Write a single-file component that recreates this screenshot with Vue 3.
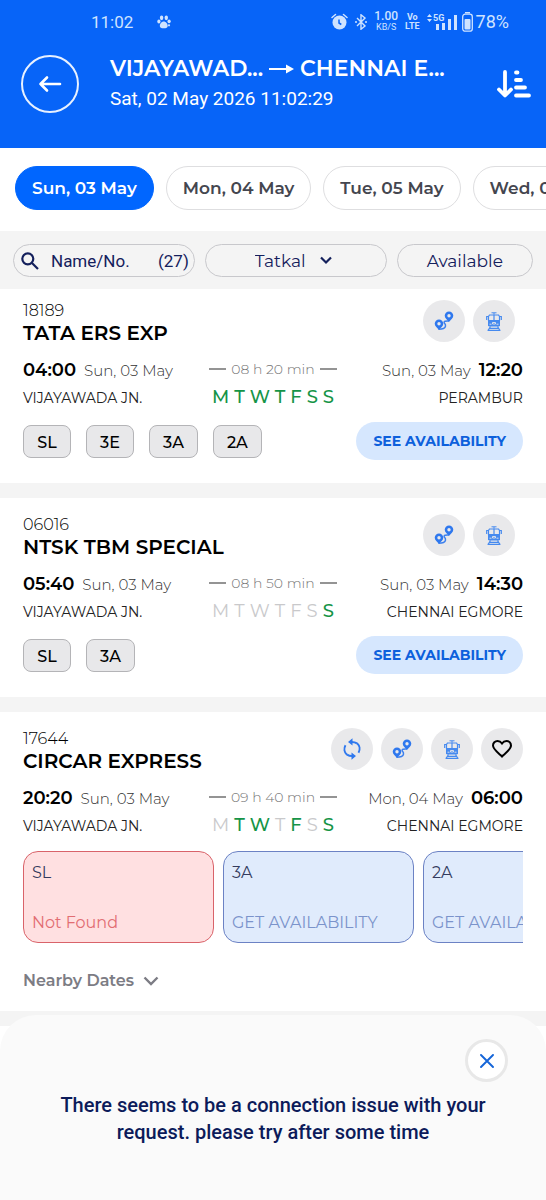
<script setup>
import { ref } from 'vue'

const days = ['Sun, 03 May', 'Mon, 04 May', 'Tue, 05 May', 'Wed, 06 May']
const selectedDay = ref(0)
const query = ref('')
const noticeOpen = ref(true)
const week = ['M', 'T', 'W', 'T', 'F', 'S', 'S']

const trains = [
  {
    number: '18189', name: 'TATA ERS EXP',
    departs: '04:00', departDay: 'Sun, 03 May', from: 'VIJAYAWADA JN.',
    arrives: '12:20', arriveDay: 'Sun, 03 May', to: 'PERAMBUR',
    duration: '08 h 20 min', runs: [1, 1, 1, 1, 1, 1, 1],
    actions: ['route', 'train'], classes: ['SL', '3E', '3A', '2A']
  },
  {
    number: '06016', name: 'NTSK TBM SPECIAL',
    departs: '05:40', departDay: 'Sun, 03 May', from: 'VIJAYAWADA JN.',
    arrives: '14:30', arriveDay: 'Sun, 03 May', to: 'CHENNAI EGMORE',
    duration: '08 h 50 min', runs: [0, 0, 0, 0, 0, 0, 1],
    actions: ['route', 'train'], classes: ['SL', '3A']
  },
  {
    number: '17644', name: 'CIRCAR EXPRESS',
    departs: '20:20', departDay: 'Sun, 03 May', from: 'VIJAYAWADA JN.',
    arrives: '06:00', arriveDay: 'Mon, 04 May', to: 'CHENNAI EGMORE',
    duration: '09 h 40 min', runs: [0, 1, 1, 0, 1, 0, 1],
    actions: ['refresh', 'route', 'train', 'favourite'],
    fares: [
      { code: 'SL', status: 'Not Found', missing: true },
      { code: '3A', status: 'GET AVAILABILITY' },
      { code: '2A', status: 'GET AVAILABILITY' }
    ]
  }
]
</script>

<template>
  <div class="screen">
    <header class="header">
      <div class="status">
        <span class="clock">11:02</span>
        <svg class="paw" width="14" height="14" viewBox="0 0 14 14" fill="currentColor">
          <ellipse cx="4.6" cy="2.8" rx="1.7" ry="2.4" />
          <ellipse cx="9.3" cy="2.8" rx="1.7" ry="2.4" />
          <ellipse cx="1.9" cy="6.5" rx="1.6" ry="1.9" />
          <ellipse cx="12.1" cy="6.3" rx="1.6" ry="1.9" />
          <path d="M6.7 6.5c2.2 0 4 2.300 4 4.500 0 1.700-1.400 2.300-4 2.300S2.800 12.700 2.800 11c0-2.200 1.800-4.500 3.900-4.500Z" />
          <circle cx="12" cy="10.300" r="1.100" />
        </svg>
        <div class="indicators">
          <svg width="17" height="17" viewBox="0 0 17 17">
            <circle cx="8.500" cy="9.500" r="7" fill="currentColor" />
            <path d="M1 4.500 4.500 1.500M16 4.500l-3.500-3" stroke="currentColor" stroke-width="1.500" fill="none" stroke-linecap="round" />
            <path d="M8 6.500v3.500l2.300 1.500" stroke="#0764f8" stroke-width="1.500" fill="none" />
          </svg>
          <svg class="bluetooth" width="12" height="16" viewBox="0 0 12 16" fill="none" stroke="currentColor" stroke-width="1.400">
            <path d="m2 4 8 8-4 3.200V.8L10 4l-8 8" />
            <path d="M0 8h2M10 8h2" />
          </svg>
          <span class="stack speed"><b>1.00</b><i>KB/S</i></span>
          <span class="stack lte"><b>Vo</b><b>LTE</b></span>
          <svg class="signal" width="30" height="18" viewBox="0 0 30 18" fill="currentColor">
            <path d="m0 4 2.500-3L5 4ZM0 6l2.500 3L5 6Z" />
            <text x="6" y="8" font-size="9" font-weight="700" font-family="Roboto, sans-serif">5G</text>
            <path d="M9 11h3v6H9zM15 10h3v7h-3zM21 6h3v11h-3zM27 2h3v15h-3z" />
          </svg>
          <svg class="battery" width="11" height="20" viewBox="0 0 11 20">
            <path d="M3 .7h5" stroke="currentColor" stroke-width="1.400" />
            <rect x=".7" y="2.200" width="9.600" height="17" rx="2.500" fill="none" stroke="currentColor" stroke-width="1.300" />
            <rect x="2.500" y="7" width="6" height="10.500" rx="1" fill="currentColor" />
          </svg>
          <span class="charge">78%</span>
        </div>
      </div>
      <div class="trip">
        <button class="back" aria-label="Back">
          <svg width="24" height="18" viewBox="0 0 24 18" fill="none" stroke="currentColor" stroke-width="2.600" stroke-linecap="round" stroke-linejoin="round">
            <path d="M22 9H2.500M9 2.500 2.500 9 9 15.500" />
          </svg>
        </button>
        <div class="trip-text">
          <h1>
            <span>VIJAYAWAD...</span>
            <svg width="25" height="12" viewBox="0 0 25 12"><path d="M0 5h17V1.500L25 6l-8 4.500V7H0Z" fill="currentColor" /></svg>
            <span>CHENNAI E...</span>
          </h1>
          <p>Sat, 02 May 2026 11:02:29</p>
        </div>
        <button class="sort" aria-label="Sort">
          <svg width="34" height="28" viewBox="0 0 34 28" fill="none" stroke="currentColor" stroke-width="3.800" stroke-linecap="round" stroke-linejoin="round">
            <path d="M8 2v22M2 19.500l6 6 6-6" />
            <path d="M19 2.500h1.500M19 10h5M19 17.500h9M19 25.500h13" />
          </svg>
        </button>
      </div>
    </header>

    <nav class="days" aria-label="Travel date">
      <button
        v-for="(day, i) in days" :key="day"
        class="day" :class="{ active: i === selectedDay }"
        @click="selectedDay = i"
      >{{ day }}</button>
    </nav>

    <div class="filters">
      <label class="pill search">
        <svg width="18" height="18" viewBox="0 0 18 18" fill="none" stroke="currentColor" stroke-width="2.200">
          <circle cx="6.800" cy="6.800" r="5.500" /><path d="m11 11 6 6" />
        </svg>
        <input v-model="query" type="text" placeholder="Name/No." aria-label="Train name or number" />
        <span>(27)</span>
      </label>
      <label class="pill quota">
        <select aria-label="Quota"><option>Tatkal</option></select>
        <svg width="14" height="9" viewBox="0 0 14 9" fill="none" stroke="currentColor" stroke-width="2.200"><path d="m2 1.500 5 5 5-5" /></svg>
      </label>
      <button class="pill available">Available</button>
    </div>

    <main>
      <article v-for="train in trains" :key="train.number" class="card">
        <div class="card-head">
          <div>
            <p class="number">{{ train.number }}</p>
            <h2>{{ train.name }}</h2>
          </div>
          <div class="actions" :class="{ full: train.actions.length > 2 }">
            <button v-for="action in train.actions" :key="action" class="action" :aria-label="action">
              <svg v-if="action === 'route'" width="20" height="20" viewBox="0 0 20 20">
                <path d="M15 10c-3-.3-6 .3-4.500 2.200 1.500 1.500 1.500 4.300-1 5.300-1.500.6-3 .7-5 .7" fill="none" stroke="#3d81ee" stroke-width="1.500" />
                <path fill-rule="evenodd" fill="#2f78ee" d="M15 .5a4.300 4.300 0 0 1 4.300 4.300c0 2.600-2.800 4.200-4.300 6.200-1.500-2-4.300-3.600-4.300-6.200A4.300 4.300 0 0 1 15 .5Zm0 2.600a1.700 1.700 0 1 0 0 3.400 1.700 1.700 0 0 0 0-3.400ZM5 8.500a4.300 4.300 0 0 1 4.300 4.300c0 2.600-2.800 4.200-4.300 6.200-1.500-2-4.300-3.600-4.300-6.200A4.300 4.300 0 0 1 5 8.500Zm0 2.600a1.700 1.700 0 1 0 0 3.400 1.700 1.700 0 0 0 0-3.400Z" />
              </svg>
              <svg v-else-if="action === 'train'" width="16" height="19" viewBox="0 0 16 19" fill="none" stroke="#468aef">
                <path d="M5.500 .8h5M8 .8v2" />
                <path d="M2.500 8.500v-4l1-1.500h9l1 1.500v4ZM8 3v5.500" stroke-width="1.200" />
                <path d="M2.500 4.500H.7V8M13.500 4.500h1.800V8" stroke-width="1.200" />
                <path d="M2 8h12v5.500l-1 1H3l-1-1Z" fill="#468aef" stroke="none" />
                <path d="M3.500 12.200h2M10.500 12.200h2M6.500 10.500h3v1.500h-3Z" stroke="#e8e8ea" stroke-width=".9" />
                <path d="M4.500 14.500 2 18.500M11.500 14.500l2.500 4M3.500 16.400h9M1.500 18.300h13" stroke-width="1.200" />
              </svg>
              <svg v-else-if="action === 'refresh'" width="18" height="22" viewBox="0 0 18 22" fill="none" stroke="#2f78ee" stroke-width="2">
                <path d="M4 16.700A7.500 7.500 0 0 1 2.500 7.200M14 5.300a7.500 7.500 0 0 1 1.500 9.500" />
                <path d="M8 3.900c2.500-.1 4.500.4 6 1.400M10 18.100c-2.500.1-4.500-.4-6-1.400" />
                <path d="M9.500 .2v7.400L5 3.900ZM8.500 14.400v7.400l4.500-3.700Z" fill="#2f78ee" stroke="none" />
              </svg>
              <svg v-else width="20" height="18" viewBox="0 0 20 18" fill="none" stroke="#000" stroke-width="2">
                <path d="M10 16.500 8.500 15C4 11 1 8.700 1 5.500A4.500 4.500 0 0 1 5.500 1C7.400 1 9 2 10 3.500 11 2 12.600 1 14.500 1A4.500 4.500 0 0 1 19 5.500c0 3.200-3 5.500-7.500 9.500Z" />
              </svg>
            </button>
          </div>
        </div>

        <div class="row times">
          <p><b>{{ train.departs }}</b><span>{{ train.departDay }}</span></p>
          <p class="duration">{{ train.duration }}</p>
          <p class="end"><span>{{ train.arriveDay }}</span><b>{{ train.arrives }}</b></p>
        </div>
        <div class="row stations">
          <p>{{ train.from }}</p>
          <div class="week">
            <span v-for="(letter, i) in week" :key="i" :class="{ on: train.runs[i] }">{{ letter }}</span>
          </div>
          <p class="end">{{ train.to }}</p>
        </div>

        <div v-if="train.classes" class="booking">
          <button v-for="code in train.classes" :key="code" class="class-chip">{{ code }}</button>
          <button class="see">SEE AVAILABILITY</button>
        </div>
        <template v-else>
          <div class="fares">
            <button v-for="fare in train.fares" :key="fare.code" class="fare" :class="{ missing: fare.missing }">
              <span>{{ fare.code }}</span>
              <span class="fare-status">{{ fare.status }}</span>
            </button>
          </div>
          <button class="nearby">
            Nearby Dates
            <svg width="16" height="10" viewBox="0 0 16 10" fill="none" stroke="currentColor" stroke-width="2.400"><path d="m1.500 1.500 6.500 6.500 6.500-6.500" /></svg>
          </button>
        </template>
      </article>
    </main>

    <section v-if="noticeOpen" class="sheet" role="alert">
      <button class="close" aria-label="Close" @click="noticeOpen = false">
        <svg width="14" height="14" viewBox="0 0 14 14" fill="none" stroke="currentColor" stroke-width="1.900" stroke-linecap="round"><path d="m1 1 12 12M13 1 1 13" /></svg>
      </button>
      <p>There seems to be a connection issue with your request. please try after some time</p>
    </section>
  </div>
</template>

<style>
body { background: #fff; }
</style>

<style scoped>
.screen { font-family: Montserrat, Inter, sans-serif; color: #000; overflow-x: hidden; min-height: 100vh; background: #fff; }
.screen *, .screen { box-sizing: border-box; }
p, h1, h2 { margin: 0; }
button, input, select { font: inherit; color: inherit; background: none; border: 0; padding: 0; margin: 0; }
button { cursor: pointer; }
svg { display: block; flex: none; }

.header { background: #0764f8; color: #fff; padding-bottom: 34px; }
.status { display: flex; align-items: center; height: 43px; padding: 0 37px 0 91px; color: #cfe3ff; font-family: Roboto, sans-serif; }
.clock { font-size: 17px; }
.charge { font-size: 18px; }
.paw { margin-left: 24px; }
.indicators { margin-left: auto; display: flex; align-items: center; gap: 7px; }
.stack { display: flex; flex-direction: column; align-items: center; font-size: 9px; line-height: 9px; }
.stack b { font-weight: 500; }
.stack i { font-style: normal; }
.speed b { font-size: 12px; line-height: 12px; }
.speed i { line-height: 11px; }
.lte { line-height: 9px; }
.stack.lte b { font-weight: 700; }
.battery { margin-right: -4px; }
.signal { margin-right: -2px; }

.trip { display: flex; align-items: center; padding: 11px 15px 0 21px; }
.back { width: 58px; height: 58px; border: 2px solid #e8f1ff; border-radius: 50%; display: grid; place-items: center; flex: none; }
.trip-text { margin-left: 31px; flex: 1; min-width: 0; white-space: nowrap; }
h1 { font-size: 22px; line-height: 30px; font-weight: 600; display: flex; align-items: center; gap: 6px; }
.trip-text p { font: 19px/30px Roboto, sans-serif; }

.days { display: flex; gap: 12px; padding: 18px 15px 21px; overflow: hidden; }
.day { flex: none; height: 44px; padding: 0 16px; border: 1px solid #dedee0; border-radius: 22px; font-size: 17px; font-weight: 600; color: #44464f; }
.day.active { background: #0066ff; border-color: #0066ff; color: #fff; }

.filters { display: grid; grid-template-columns: 4fr 4fr 3fr; gap: 10px; padding: 13px 13px 12px; background: #f4f4f4; color: #14205c; }
.pill { min-width: 0; height: 33px; border: 1px solid #c8c8cc; border-radius: 17px; display: flex; align-items: center; font-size: 17px; }
.search { padding: 0 5px 0 7px; font-family: Roboto, sans-serif; }
.search input { flex: 1; min-width: 0; margin-left: 12px; outline: 0; }
.search input::placeholder { color: #14205c; opacity: 1; }
.quota { justify-content: center; gap: 13px; padding-right: 4px; }
.quota select { appearance: none; outline: 0; }
.available { justify-content: center; }

.card { padding: 15px 23px 23px; border-bottom: 15px solid #f4f4f4; }
.card:first-child { padding-top: 10px; }
.card:last-child { padding-bottom: 18px; }
.card-head { display: flex; justify-content: space-between; align-items: center; }
.number { font-size: 16px; line-height: 24px; font-weight: 300; }
h2 { font-size: 20px; line-height: 20px; font-weight: 600; }
.actions { display: flex; gap: 8px; margin-right: 8px; }
.actions.full { margin-right: 0; }
.action { width: 42px; height: 42px; border-radius: 50%; background: #e9e9eb; display: grid; place-items: center; }

.row { display: grid; grid-template-columns: 1fr 128px 1fr; align-items: center; white-space: nowrap; }
.end { text-align: right; }
.times { margin-top: 15px; height: 25px; line-height: 24px; font-size: 15px; font-weight: 300; color: #333; }
.times b { font-size: 18px; font-weight: 600; color: #000; }
.times b + span, .times span + b { margin-left: 8px; }
.times .duration { font-size: 14px; line-height: 22px; color: #777; display: flex; align-items: center; justify-content: space-between; align-self: start; }
.duration::before, .duration::after { content: ''; width: 17px; height: 2px; background: #949494; }
.stations { margin-top: 2px; line-height: 26px; font-size: 14px; font-weight: 400; color: #222; }
.week { display: flex; justify-content: space-between; padding: 0 3px; font-size: 18px; line-height: 24px; font-weight: 400; color: #c9c9cb; align-self: start; }
.week .on { color: #159447; font-weight: 500; }

.booking { margin-top: 11px; display: flex; align-items: center; gap: 15px; }
.class-chip { height: 33px; min-width: 48px; padding: 2px 13px 0; border: 1px solid #b4b4b7; border-radius: 8px; background: #e8e8ea; font-size: 16px; font-weight: 500; }
.see { margin-left: auto; height: 38px; padding: 0 17px; border-radius: 19px; background: #d6e7fe; color: #0d60dc; font-size: 14px; font-weight: 700; }

.fares { margin-top: 12px; display: flex; gap: 9px; overflow: hidden; }
.fare { flex: 0 0 191px; height: 92px; padding: 9px 8px 7px; border: 1px solid #6c82c4; border-radius: 15px; background: #e0ebfc; color: #343b5e; font-size: 16px; line-height: 24px; display: flex; flex-direction: column; justify-content: space-between; align-items: flex-start; white-space: nowrap; }
.fare-status { color: #7b93cb; }
.fare.missing { background: #ffe0e1; border-color: #d9636a; }
.missing .fare-status { color: #e26d72; }
.nearby { margin-top: 26px; display: flex; align-items: center; gap: 9px; font-size: 16px; line-height: 24px; font-weight: 600; color: #7c7c84; }

.sheet { position: fixed; bottom: 0; left: 0; right: 0; padding: 24px 38px 54px; background: #fafafa; border-radius: 36px 36px 0 0; }
.close { width: 43px; height: 43px; margin-left: auto; border: 3px solid #e8e8e8; border-radius: 50%; background: #fff; color: #1565d8; display: grid; place-items: center; }
.sheet p { margin-top: 10px; padding: 0 12px; text-align: center; font: 500 20px/27px Roboto, sans-serif; color: #0c1b5a; }
</style>
